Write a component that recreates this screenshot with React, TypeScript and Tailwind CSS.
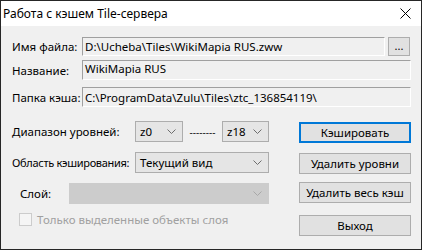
import React from 'react';

const font = { fontFamily: '"Noto Sans", "Open Sans", sans-serif' };

function Chevron({ color = '#6d6d6d' }: { color?: string }) {
  return (
    <svg width="9" height="5" viewBox="0 0 9 5" className="shrink-0">
      <polyline points="0.5,0.5 4.5,4.5 8.5,0.5" fill="none" stroke={color} strokeWidth="1" />
    </svg>
  );
}

function Combo({ value, width, disabled }: { value: string; width: string; disabled?: boolean }) {
  return (
    <div
      className={`${width} h-[21px] flex items-center justify-between pl-[4px] pr-[6px] border ${
        disabled ? 'bg-[#cccccc] border-[#cccccc]' : 'bg-[#e5e5e5] border-[#adadad]'
      }`}
    >
      <span>{value}</span>
      <Chevron color={disabled ? '#a8a8a8' : '#6d6d6d'} />
    </div>
  );
}

function Button({ text, top, focused }: { text: string; top: string; focused?: boolean }) {
  return (
    <div
      className={`${top} w-[112px] h-[21px] flex items-center justify-center bg-[#e1e1e1] ${
        focused ? 'border-2 border-[#0078d7]' : 'border border-[#adadad]'
      }`}
    >
      {text}
    </div>
  );
}

export default function App() {
  return (
    <div
      className="w-[422px] h-[250px] border border-[#262626] flex flex-col text-[11.5px] leading-[15px] text-black whitespace-nowrap overflow-hidden"
      style={font}
    >
      <div className="h-[25px] shrink-0 bg-white flex items-center justify-between pl-[2px] pr-[10px] text-[12px]">
        <span>Работа с кэшем Tile-сервера</span>
        <svg width="11" height="11" viewBox="0 0 11 11">
          <line x1="0.5" y1="0.5" x2="10.5" y2="10.5" stroke="#000" strokeWidth="1" />
          <line x1="10.5" y1="0.5" x2="0.5" y2="10.5" stroke="#000" strokeWidth="1" />
        </svg>
      </div>
      <div className="flex-1 bg-[#f0f0f0] pr-[10px]">
        <div className="flex items-center mt-[11px] h-[19px]">
          <div className="w-[81px] pl-[11px] shrink-0">Имя файла:</div>
          <div className="w-[303px] h-[19px] flex items-center px-[2px] border border-t-[#a0a0a0] border-l-[#a0a0a0] border-b-white border-r-white bg-[#f0f0f0] overflow-hidden">
            D:\Ucheba\Tiles\WikiMapia RUS.zww
          </div>
          <div className="ml-[3px] w-[22px] h-[19px] flex items-center justify-center bg-[#e1e1e1] border border-[#adadad] text-[11px] leading-none pb-[3px]">
            ...
          </div>
        </div>
        <div className="flex items-start mt-[4px] h-[20px]">
          <div className="w-[81px] pl-[11px] shrink-0 pt-[3px]">Название:</div>
          <div className="flex-1 h-[20px] flex items-start px-[2px] border border-t-[#a0a0a0] border-l-[#a0a0a0] border-b-white border-r-white bg-[#f0f0f0]">
            WikiMapia RUS
          </div>
        </div>
        <div className="flex items-center mt-[7px] h-[20px]">
          <div className="w-[81px] pl-[11px] shrink-0">Папка кэша:</div>
          <div className="flex-1 h-[20px] flex items-center px-[2px] border border-t-[#a0a0a0] border-l-[#a0a0a0] border-b-white border-r-white bg-[#f0f0f0] overflow-hidden">
            C:\ProgramData\Zulu\Tiles\ztc_136854119\
          </div>
        </div>
        <div className="flex mt-[14px]">
          <div className="w-[268px] flex flex-col">
            <div className="flex items-center h-[21px]">
              <div className="w-[134px] pl-[11px] shrink-0">Диапазон уровней:</div>
              <Combo value="z0" width="w-[48px]" />
              <div className="w-[39px] flex justify-center text-[10px] leading-none text-[#202020]">--------</div>
              <Combo value="z18" width="w-[47px]" />
            </div>
            <div className="flex items-center mt-[10px] h-[21px]">
              <div className="w-[134px] pl-[11px] shrink-0 text-[11px] tracking-[-0.3px]">Область кэширования:</div>
              <Combo value="Текущий вид" width="w-[134px]" />
            </div>
            <div className="flex items-center mt-[10px] h-[21px]">
              <div className="w-[68px] pl-[19px] shrink-0">Слой:</div>
              <Combo value="" width="w-[200px]" disabled />
            </div>
            <div className="flex items-center mt-[8px] h-[14px] pl-[18px] text-[#a0a0a0]">
              <div className="w-[13px] h-[13px] border border-[#cccccc] bg-[#f5f5f5] mr-[5px] shrink-0" />
              <span>Только выделенные объекты слоя</span>
            </div>
          </div>
          <div className="flex-1 flex flex-col items-end">
            <Button text="Кэшировать" top="mt-[1px]" focused />
            <Button text="Удалить уровни" top="mt-[10px]" />
            <Button text="Удалить весь кэш" top="mt-[8px]" />
            <Button text="Выход" top="mt-[12px]" />
          </div>
        </div>
      </div>
    </div>
  );
}
